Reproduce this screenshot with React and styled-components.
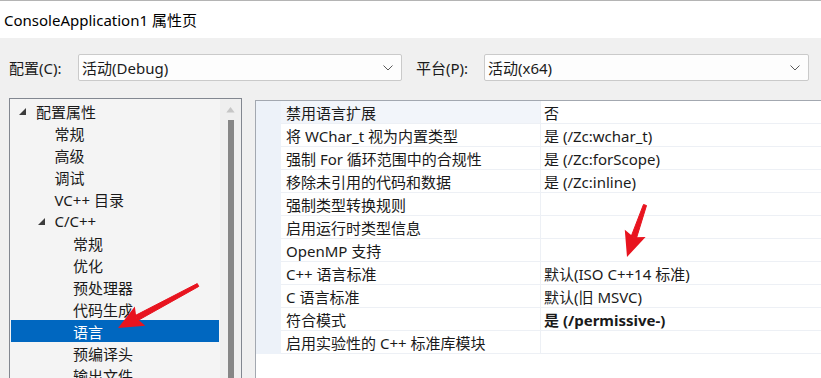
import React from 'react';
import styled, { createGlobalStyle } from 'styled-components';

const GlobalStyle = createGlobalStyle`
  html, body {
    margin: 0;
    padding: 0;
    background: #f0f0f0;
  }
  body {
    font-family: "Noto Sans", "Noto Sans CJK SC", sans-serif;
    font-size: 15px;
    color: #1a1a1a;
  }
`

const Window = styled.div`
  position: relative;
  width: 821px;
  height: 378px;
  overflow: hidden;
  display: flex;
  flex-direction: column;
  background: #f0f0f0;
`
const TitleBar = styled.div`
  height: 37px;
  flex: none;
  border-top: 1px solid #b4b4b4;
  background: #fff;
  display: flex;
  align-items: center;
  padding-left: 4px;
  font-size: 15px;
  color: #000;
`
const Body = styled.div`
  flex: 1;
  display: flex;
  flex-direction: column;
  min-height: 0;
`
const ConfigRow = styled.div`
  display: flex;
  align-items: center;
  padding: 16px 0 0 9px;
  height: 27px;
  flex: none;
`
const FieldLabel = styled.span`
  width: ${props => props.width}px;
  flex: none;
  color: #1a1a1a;
`
const Select = styled.div`
  box-sizing: border-box;
  width: ${props => props.width}px;
  height: 27px;
  margin-right: ${props => props.gap || 0}px;
  display: flex;
  align-items: center;
  justify-content: space-between;
  padding: 0 8px 0 3px;
  background: #fdfdfd;
  border: 1px solid #cacaca;
  border-radius: 2px;
  color: #1a1a1a;
`
const Panels = styled.div`
  display: flex;
  align-items: flex-start;
  padding: 17px 0 0 9px;
  flex: 1;
  min-height: 0;
`
const TreePanel = styled.div`
  box-sizing: border-box;
  width: 233px;
  height: 300px;
  flex: none;
  display: flex;
  border: 1px solid #828790;
  background: #f4f4f4;
`
const TreeList = styled.div`
  flex: 1;
  padding: 1px 1px 0;
`
const TreeRow = styled.div`
  height: 22px;
  display: flex;
  align-items: center;
  padding-left: ${props => 8 + props.level * 18.5}px;
  background: ${props => props.selected ? '#0067c0' : 'transparent'};
  color: ${props => props.selected ? '#fff' : '#1a1a1a'};
  white-space: nowrap;
`
const Toggle = styled.span`
  width: 17px;
  flex: none;
  display: flex;
  align-items: center;
`
const ScrollTrack = styled.div`
  width: 21px;
  flex: none;
  background: #efefef;
  display: flex;
  flex-direction: column;
  align-items: center;
  padding-top: 8px;
`
const ScrollThumb = styled.div`
  width: 6px;
  height: 300px;
  margin-top: 7px;
  background: #868686;
`
const GridPanel = styled.div`
  box-sizing: border-box;
  margin: 2px 0 0 13px;
  flex: 1;
  height: 300px;
  border-top: 1px solid #a3a8b0;
  border-left: 1px solid #a3a8b0;
  background: #fff;
`
const PropRow = styled.div`
  display: flex;
  height: 23px;
`
const Gutter = styled.div`
  width: 25px;
  flex: none;
  background: #edf2f9;
`
const NameCell = styled.div`
  box-sizing: border-box;
  width: 260px;
  flex: none;
  display: flex;
  align-items: center;
  padding-left: 5px;
  border-right: 1px solid #edf0f5;
  border-bottom: 1px solid #edf0f5;
  background: ${props => props.active ? '#f2f5fa' : '#fff'};
  white-space: nowrap;
`
const ValueCell = styled.div`
  flex: 1;
  display: flex;
  align-items: center;
  padding-left: 3px;
  border-bottom: 1px solid #edf0f5;
  font-weight: ${props => props.bold ? 700 : 400};
  white-space: nowrap;
`
const Overlay = styled.svg`
  position: absolute;
  left: 0;
  top: 0;
  pointer-events: none;
`

const Chevron = () => (
  <svg width="10" height="6" viewBox="0 0 10 6">
    <path d="M0.5 0.5 L5 5 L9.5 0.5" fill="none" stroke="#5a5a5a" strokeWidth="1" />
  </svg>
)

const Triangle = () => (
  <svg width="7" height="7" viewBox="0 0 7 7">
    <polygon points="7,0 7,7 0,7" fill="#3c3c3c" />
  </svg>
)

const treeItems = [
  { label: '配置属性', level: 0, open: true },
  { label: '常规', level: 1 },
  { label: '高级', level: 1 },
  { label: '调试', level: 1 },
  { label: 'VC++ 目录', level: 1 },
  { label: 'C/C++', level: 1, open: true },
  { label: '常规', level: 2 },
  { label: '优化', level: 2 },
  { label: '预处理器', level: 2 },
  { label: '代码生成', level: 2 },
  { label: '语言', level: 2, selected: true },
  { label: '预编译头', level: 2 },
  { label: '输出文件', level: 2 },
]

const props = [
  ['禁用语言扩展', '否'],
  ['将 WChar_t 视为内置类型', '是 (/Zc:wchar_t)'],
  ['强制 For 循环范围中的合规性', '是 (/Zc:forScope)'],
  ['移除未引用的代码和数据', '是 (/Zc:inline)'],
  ['强制类型转换规则', ''],
  ['启用运行时类型信息', ''],
  ['OpenMP 支持', ''],
  ['C++ 语言标准', '默认(ISO C++14 标准)'],
  ['C 语言标准', '默认(旧 MSVC)'],
  ['符合模式', '是 (/permissive-)', true],
  ['启用实验性的 C++ 标准库模块', ''],
]

// red annotation arrow, tail -> tip
const Arrow = ({ tail, tip }) => {
  const dx = tip[0] - tail[0];
  const dy = tip[1] - tail[1];
  const len = Math.hypot(dx, dy);
  const ux = dx / len, uy = dy / len;
  const nx = -uy, ny = ux;
  const headLen = 25, headW = 11;
  const bx = tip[0] - ux * headLen, by = tip[1] - uy * headLen;
  const b2x = tip[0] - ux * (headLen - 4), b2y = tip[1] - uy * (headLen - 4);
  const shaft = [
    [tail[0] + nx * 1.6, tail[1] + ny * 1.6],
    [b2x + nx * 2.8, b2y + ny * 2.8],
    [b2x - nx * 2.8, b2y - ny * 2.8],
    [tail[0] - nx * 1.6, tail[1] - ny * 1.6],
  ];
  const head = [
    tip,
    [bx + nx * headW, by + ny * headW],
    [b2x, b2y],
    [bx - nx * headW, by - ny * headW],
  ];
  const pts = a => a.map(p => p.join(',')).join(' ');
  return (
    <g fill="#e8141f">
      <polygon points={pts(shaft)} strokeLinejoin="round" stroke="#e8141f" strokeWidth="1" />
      <polygon points={pts(head)} />
    </g>
  )
}

const App = () => {
  return (
    <Window>
      <GlobalStyle />
      <TitleBar>ConsoleApplication1 属性页</TitleBar>
      <Body>
        <ConfigRow>
          <FieldLabel width={69}>配置(C):</FieldLabel>
          <Select width={324} gap={14}>
            <span>活动(Debug)</span>
            <Chevron />
          </Select>
          <FieldLabel width={68}>平台(P):</FieldLabel>
          <Select width={325}>
            <span>活动(x64)</span>
            <Chevron />
          </Select>
        </ConfigRow>
        <Panels>
          <TreePanel>
            <TreeList>
              {treeItems.map((item, i) => (
                <TreeRow key={i} level={item.level} selected={item.selected}>
                  <Toggle>{item.open && <Triangle />}</Toggle>
                  {item.label}
                </TreeRow>
              ))}
            </TreeList>
            <ScrollTrack>
              <svg width="9" height="6" viewBox="0 0 9 6">
                <polygon points="4.5,0 9,6 0,6" fill="#c6c6c6" />
              </svg>
              <ScrollThumb />
            </ScrollTrack>
          </TreePanel>
          <GridPanel>
            {props.map(([name, value, bold], i) => (
              <PropRow key={i}>
                <Gutter />
                <NameCell active={i === 0}>{name}</NameCell>
                <ValueCell bold={bold}>{value}</ValueCell>
              </PropRow>
            ))}
          </GridPanel>
        </Panels>
      </Body>
      <Overlay width="821" height="378">
        <Arrow tail={[198, 285]} tip={[118, 328]} />
        <Arrow tail={[645, 205]} tip={[627, 257]} />
      </Overlay>
    </Window>
  )
}

export default App
